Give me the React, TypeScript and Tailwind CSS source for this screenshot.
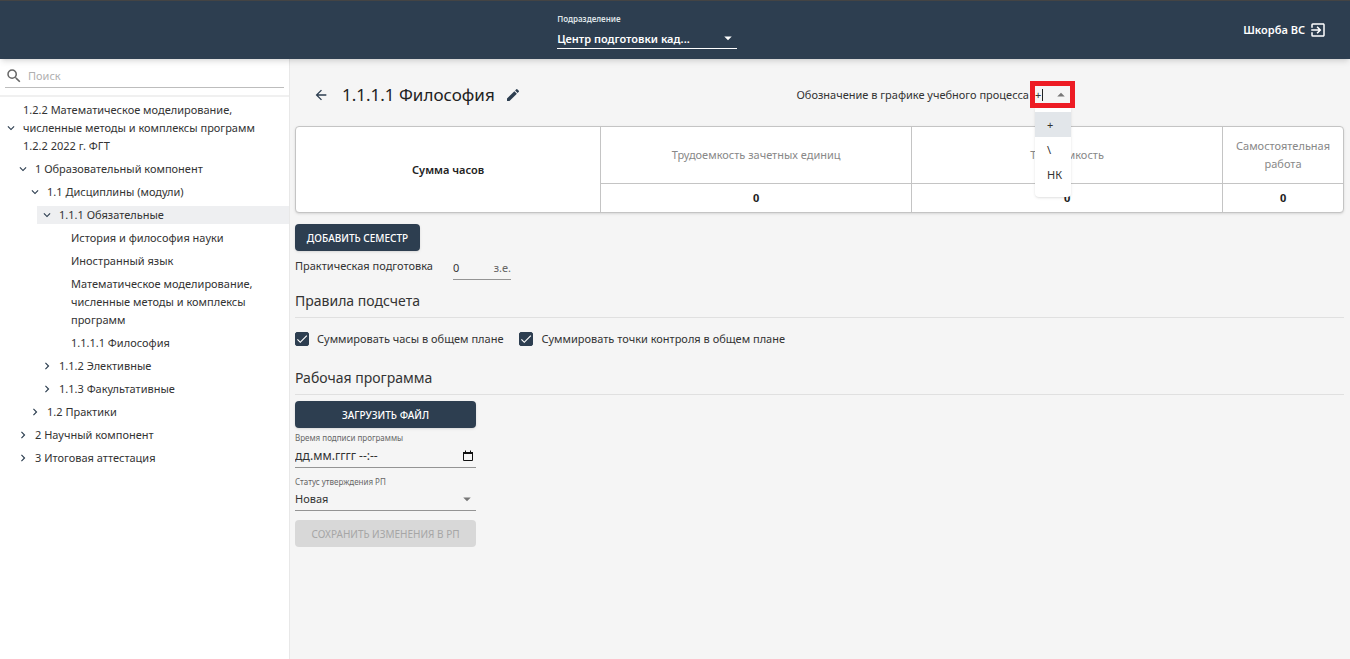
import { useState } from "react";
import {
  MdArrowBack,
  MdArrowDropDown,
  MdArrowDropUp,
  MdCheck,
  MdChevronRight,
  MdEdit,
  MdExitToApp,
  MdExpandMore,
  MdSearch,
} from "react-icons/md";
import { clsx } from "clsx";

type TreeNode = {
  title: string;
  open?: boolean;
  selected?: boolean;
  branch?: boolean;
  children?: TreeNode[];
};

const tree: TreeNode[] = [
  {
    title:
      "1.2.2 Математическое моделирование, численные методы и комплексы программ 1.2.2 2022 г. ФГТ",
    open: true,
    branch: true,
    children: [
      {
        title: "1 Образовательный компонент",
        open: true,
        branch: true,
        children: [
          {
            title: "1.1 Дисциплины (модули)",
            open: true,
            branch: true,
            children: [
              {
                title: "1.1.1 Обязательные",
                open: true,
                branch: true,
                selected: true,
                children: [
                  { title: "История и философия науки" },
                  { title: "Иностранный язык" },
                  {
                    title:
                      "Математическое моделирование, численные методы и комплексы программ",
                  },
                  { title: "1.1.1.1 Философия" },
                ],
              },
              { title: "1.1.2 Элективные", branch: true },
              { title: "1.1.3 Факультативные", branch: true },
            ],
          },
          { title: "1.2 Практики", branch: true },
        ],
      },
      { title: "2 Научный компонент", branch: true },
      { title: "3 Итоговая аттестация", branch: true },
    ],
  },
];

const marks = ["+", "\\", "НК"];

function TreeItem({ node }: { node: TreeNode }) {
  const [open, setOpen] = useState(!!node.open);

  return (
    <li>
      <div
        className={clsx(
          "mb-[5px] flex items-center gap-0.5",
          node.selected && "bg-[#eeeff1]",
        )}
      >
        <span className="flex w-5 shrink-0 justify-center">
          {node.branch && (
            <button
              type="button"
              aria-label={open ? "Свернуть" : "Развернуть"}
              onClick={() => setOpen(!open)}
              className="text-[#2d3e50]"
            >
              {open ? (
                <MdExpandMore className="h-3.5 w-3.5" />
              ) : (
                <MdChevronRight className="h-3.5 w-3.5" />
              )}
            </button>
          )}
        </span>
        <a href="#" className="pr-6">
          {node.title}
        </a>
      </div>
      {open && node.children && (
        <ul className="pl-3">
          {node.children.map((child) => (
            <TreeItem key={child.title} node={child} />
          ))}
        </ul>
      )}
    </li>
  );
}

function Checkbox({ id, label }: { id: string; label: string }) {
  return (
    <div className="flex items-center gap-2">
      <span className="relative flex h-3.5 w-3.5">
        <input
          id={id}
          type="checkbox"
          defaultChecked
          className="peer h-3.5 w-3.5 appearance-none rounded-xs border border-[#2d3e50] checked:bg-[#2d3e50]"
        />
        <MdCheck className="pointer-events-none absolute inset-0 hidden h-3.5 w-3.5 text-white peer-checked:block" />
      </span>
      <label htmlFor={id}>{label}</label>
    </div>
  );
}

function SectionTitle({ children }: { children: string }) {
  return (
    <h2 className="border-b border-[#e0e0e0] pb-1.5 text-sm leading-5 text-[#333]">
      {children}
    </h2>
  );
}

function Header() {
  return (
    <header className="z-10 grid h-[59px] shrink-0 grid-cols-[10fr_180px_11fr] border-t border-[#444] bg-[#2d3e50] text-white shadow-md">
      <div className="col-start-2 pt-3">
        <label
          htmlFor="department"
          className="block text-[8px] leading-3 font-semibold text-[#dfe3e7]"
        >
          Подразделение
        </label>
        <div className="relative mt-1 border-b border-white">
          <select
            id="department"
            className="h-[19px] w-full appearance-none bg-transparent pr-5 text-[11px] font-semibold outline-none"
          >
            <option>Центр подготовки кад...</option>
          </select>
          <MdArrowDropDown className="pointer-events-none absolute top-0 right-0 h-[18px] w-[18px]" />
        </div>
      </div>
      <div className="flex items-center justify-end gap-1 pr-[23px] text-[11px] font-semibold">
        <span>Шкорба ВС</span>
        <button type="button" aria-label="Выйти">
          <MdExitToApp className="h-[18px] w-[18px]" />
        </button>
      </div>
    </header>
  );
}

function Sidebar() {
  return (
    <aside className="w-[290px] shrink-0 border-r border-[#e8e8e8] bg-white">
      <div className="border-b-2 border-[#f0f0f0] px-[5px] pt-[5px] pb-[7px]">
        <div className="flex h-6 items-center gap-[5px] border-b border-[#bdbdbd]">
          <MdSearch className="h-[18px] w-[18px] text-[#666]" />
          <input
            type="text"
            aria-label="Поиск"
            placeholder="Поиск"
            className="min-w-0 flex-1 bg-transparent outline-none placeholder:text-[#b0b0b0]"
          />
        </div>
      </div>
      <nav className="pt-1 pl-px">
        <ul>
          {tree.map((node) => (
            <TreeItem key={node.title} node={node} />
          ))}
        </ul>
      </nav>
    </aside>
  );
}

function MarkSelect() {
  const [value, setValue] = useState("+");

  return (
    <div className="relative h-[27px] w-[45px] border-5 border-[#ed1c24]">
      <div className="flex h-full items-center">
        <input
          id="mark"
          role="combobox"
          aria-expanded="true"
          aria-controls="mark-list"
          value={value}
          onChange={(e) => setValue(e.target.value)}
          className="w-[7px] bg-transparent outline-none"
        />
        <span className="h-3 w-px bg-[#222]" />
        <MdArrowDropUp className="ml-auto h-[18px] w-[18px] text-[#777]" />
      </div>
      <ul
        id="mark-list"
        role="listbox"
        className="absolute top-[22px] left-0 z-10 w-9 rounded-b bg-white pt-1 pb-2.5 leading-[25px] shadow"
      >
        {marks.map((m) => (
          <li
            key={m}
            role="option"
            aria-selected={m === value}
            onClick={() => setValue(m)}
            className={clsx("pl-3", m === value && "bg-[#e2e6ea]")}
          >
            {m}
          </li>
        ))}
      </ul>
    </div>
  );
}

function HoursTable() {
  return (
    <div className="mt-[18px] rounded-sm border border-[#c4c4c4] bg-white shadow-sm">
      <table className="w-full table-fixed border-collapse text-center">
        <thead>
          <tr className="h-14">
            <th rowSpan={2} className="w-[29.1%] font-semibold text-[#222]">
              Сумма часов
            </th>
            <th className="border-b border-l border-[#c4c4c4] font-normal text-[#888]">
              Трудоемкость зачетных единиц
            </th>
            <th className="border-b border-l border-[#c4c4c4] font-normal text-[#888]">
              Трудоемкость
            </th>
            <th className="w-[11.5%] border-b border-l border-[#c4c4c4] font-normal text-[#888]">
              Самостоятельная работа
            </th>
          </tr>
          <tr className="h-[29px] font-bold text-[#222]">
            <td className="border-l border-[#c4c4c4]">0</td>
            <td className="border-l border-[#c4c4c4]">0</td>
            <td className="border-l border-[#c4c4c4]">0</td>
          </tr>
        </thead>
      </table>
    </div>
  );
}

function WorkProgram() {
  return (
    <div className="mt-1.5 w-[181px]">
      <button
        type="button"
        className="h-[27px] w-full rounded-sm bg-[#2d3e50] text-[10px] font-medium text-white shadow"
      >
        ЗАГРУЗИТЬ ФАЙЛ
      </button>
      <label htmlFor="signed" className="mt-1 block text-[8px] leading-3 text-[#666]">
        Время подписи программы
      </label>
      <div className="flex h-6 items-center border-b border-[#949494]">
        <input
          id="signed"
          type="text"
          placeholder="дд.мм.гггг --:--"
          className="min-w-0 flex-1 bg-transparent text-xs outline-none placeholder:text-[#333]"
        />
        <button type="button" aria-label="Выбрать дату" className="mr-0.5">
          <svg viewBox="0 0 12 12" className="h-3 w-3" fill="none" stroke="#111">
            <path d="M1.5 2.5h9v8h-9z" />
            <path d="M1 3h10" strokeWidth="2" />
            <path d="M3.5 0.5v2M8.5 0.5v2" />
          </svg>
        </button>
      </div>
      <label htmlFor="status" className="mt-2 block text-[8px] leading-3 text-[#666]">
        Статус утверждения РП
      </label>
      <div className="relative border-b border-[#949494]">
        <select
          id="status"
          className="h-[22px] w-full appearance-none bg-transparent outline-none"
        >
          <option>Новая</option>
        </select>
        <MdArrowDropDown className="pointer-events-none absolute top-0.5 right-0 h-[18px] w-[18px] text-[#777]" />
      </div>
      <button
        type="button"
        disabled
        className="mt-[9px] h-[27px] w-full rounded-sm bg-[#d8d8d8] text-[10px] text-[#a6a6a6]"
      >
        СОХРАНИТЬ ИЗМЕНЕНИЯ В РП
      </button>
    </div>
  );
}

export default function App() {
  return (
    <div className="flex min-h-screen flex-col bg-[#f5f5f5] font-['Noto_Sans',sans-serif] text-[11px] leading-[18px] text-[#333]">
      <Header />
      <div className="flex flex-1">
        <Sidebar />
        <main className="min-w-0 flex-1 pt-[22px] pr-1.5 pl-[5px]">
          <div className="flex items-center justify-between pr-[269px]">
            <div className="flex items-center pl-[18px]">
              <button type="button" aria-label="Назад" className="text-[#2d3e50]">
                <MdArrowBack className="h-4 w-4" />
              </button>
              <h1 className="ml-[13px] text-[17px] leading-[27px] text-[#222]">
                1.1.1.1 Философия
              </h1>
              <button
                type="button"
                aria-label="Редактировать"
                className="ml-2.5 text-[#2d3e50]"
              >
                <MdEdit className="h-4 w-4" />
              </button>
            </div>
            <div className="flex items-center gap-px">
              <label htmlFor="mark">Обозначение в графике учебного процесса</label>
              <MarkSelect />
            </div>
          </div>

          <HoursTable />

          <button
            type="button"
            className="mt-[11px] h-[27px] w-[125px] rounded-sm bg-[#2d3e50] text-[10px] font-medium text-white shadow"
          >
            ДОБАВИТЬ СЕМЕСТР
          </button>

          <div className="mt-1.5 flex items-start gap-5">
            <label htmlFor="practice">Практическая подготовка</label>
            <div className="flex h-[23px] w-[58px] items-end border-b border-[#949494] pb-0.5">
              <input
                id="practice"
                type="text"
                defaultValue="0"
                className="min-w-0 flex-1 bg-transparent outline-none"
              />
              <span className="text-[#666]">з.е.</span>
            </div>
          </div>

          <div className="mt-[11px]">
            <SectionTitle>Правила подсчета</SectionTitle>
          </div>
          <div className="mt-3 flex flex-wrap gap-4">
            <Checkbox id="sum-hours" label="Суммировать часы в общем плане" />
            <Checkbox
              id="sum-points"
              label="Суммировать точки контроля в общем плане"
            />
          </div>

          <div className="mt-5">
            <SectionTitle>Рабочая программа</SectionTitle>
          </div>
          <WorkProgram />
        </main>
      </div>
    </div>
  );
}
